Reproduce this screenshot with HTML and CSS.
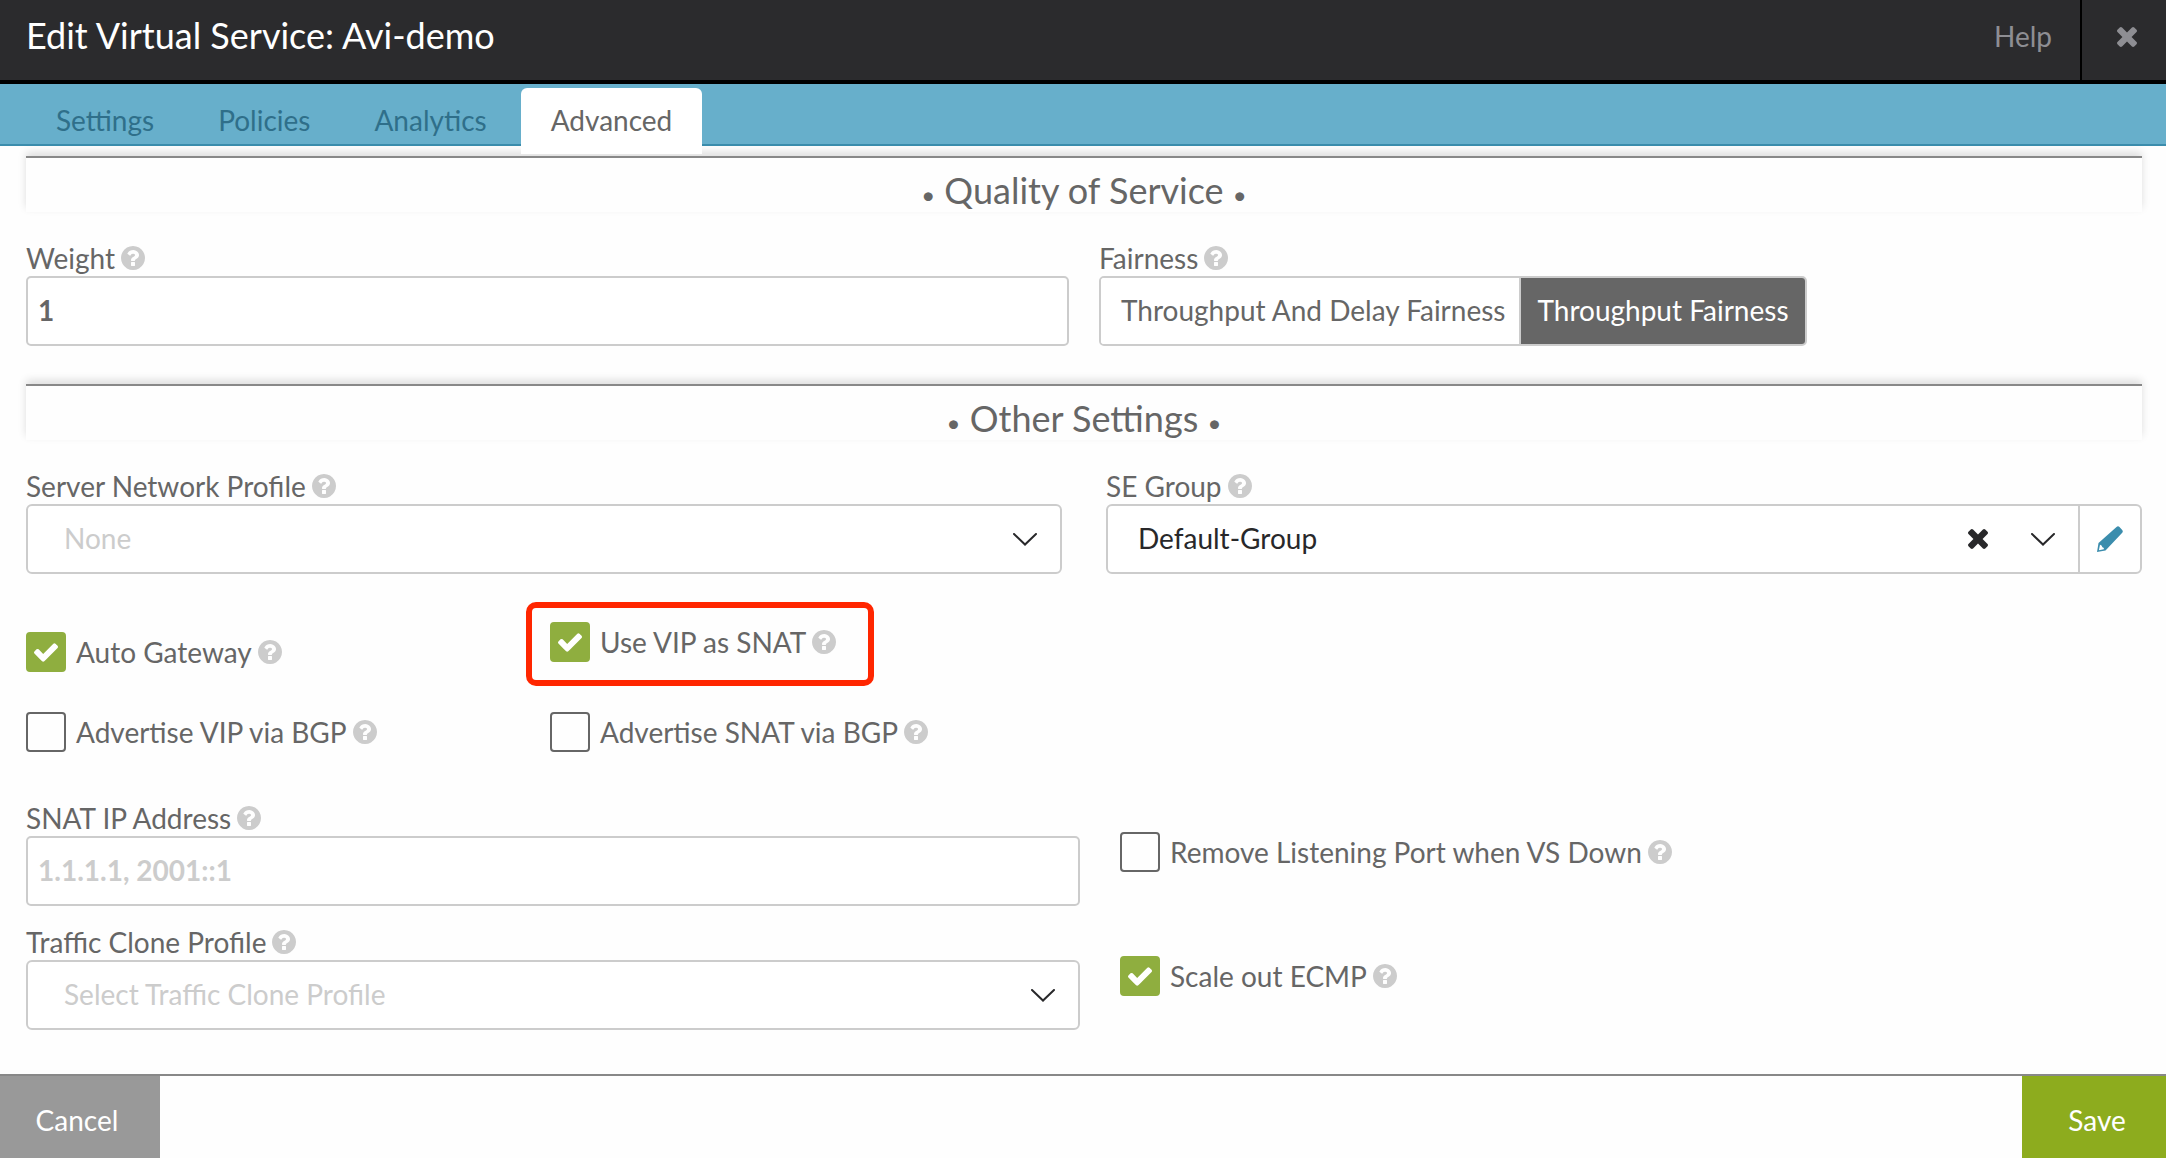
FILE: index.html
```html
<!DOCTYPE html>
<html lang="en">
<head>
<meta charset="utf-8">
<title>Edit Virtual Service: Avi-demo</title>
<link rel="stylesheet" href="styles.css">
</head>
<body>
<svg class="sprite" aria-hidden="true">
  <symbol id="help" viewBox="128 128 1536 1536"><path d="M1024 1376v-192q0-14-9-23t-23-9h-192q-14 0-23 9t-9 23v192q0 14 9 23t23 9h192q14 0 23-9t9-23zM1280 704q0-88-55.500-163t-138.500-116-170-41q-243 0-371 213-15 24 8 42l132 100q7 6 19 6 16 0 25-12 53-68 86-92 34-24 86-24 48 0 85.500 26t37.500 59q0 38-20 61t-68 45q-63 28-115.500 86.500t-52.500 125.500v36q0 14 9 23t23 9h192q14 0 23-9t9-23q0-19 21.500-49.500t54.500-49.500q32-18 49-28.500t46-35 44.500-48 28-60.500 12.500-81zM1664 896q0 209-103 385.500t-279.500 279.500-385.500 103-385.500-103-279.500-279.500-103-385.500 103-385.500 279.500-279.500 385.500-103 385.500 103 279.500 279.500 103 385.500z"/></symbol>
  <symbol id="times" viewBox="302 366 1188 1188"><path d="M1490 1322q0 40-28 68l-136 136q-28 28-68 28t-68-28l-294-294-294 294q-28 28-68 28t-68-28l-136-136q-28-28-28-68t28-68l294-294-294-294q-28-28-28-68t28-68l136-136q28-28 68-28t68 28l294 294 294-294q28-28 68-28t68 28l136 136q28 28 28 68t-28 68l-294 294 294 294q28 28 28 68z"/></symbol>
  <symbol id="chevron" viewBox="0 0 24 13"><path d="M1 1L12 11.500L23 1" fill="none" stroke="currentColor" stroke-width="2" stroke-linecap="round"/></symbol>
  <symbol id="pencil" viewBox="0 0 26 26"><path fill-rule="evenodd" d="M0 26L1.500 17L19.500 1Q21-.5 22.500 1L25.200 4Q26.500 5.500 25 7L8.500 24.500ZM1.900 24.200L6.800 23.300Q7.300 21.300 5.400 21.200Q4.900 19.200 3 18.800Z"/></symbol>
</svg>

<header class="topbar">
  <h1 class="title">Edit Virtual Service: Avi-demo</h1>
  <a class="help-link" href="#help-page">Help</a>
  <button class="close" type="button" aria-label="Close"><svg class="icon-x"><use href="#times"/></svg></button>
</header>

<nav class="tabs">
  <a class="tab" href="#settings">Settings</a>
  <a class="tab" href="#policies">Policies</a>
  <a class="tab" href="#analytics">Analytics</a>
  <a class="tab tab-active" href="#advanced" aria-current="page">Advanced</a>
</nav>

<main class="content">
  <section>
    <h2 class="heading"><span class="dot">•</span> Quality of Service <span class="dot">•</span></h2>
    <div class="row row-qos">
      <div class="field">
        <label class="label" for="weight">Weight <svg class="icon-help"><use href="#help"/></svg></label>
        <input class="text" id="weight" type="text" value="1">
      </div>
      <div class="field" role="radiogroup" aria-labelledby="fairness">
        <span class="label" id="fairness">Fairness <svg class="icon-help"><use href="#help"/></svg></span>
        <div class="segments">
          <label class="segment"><input type="radio" name="fairness">Throughput And Delay Fairness</label>
          <label class="segment"><input type="radio" name="fairness" checked>Throughput Fairness</label>
        </div>
      </div>
    </div>
  </section>

  <section>
    <h2 class="heading"><span class="dot">•</span> Other Settings <span class="dot">•</span></h2>
    <div class="row row-profile">
      <div class="field">
        <label class="label" for="profile">Server Network Profile <svg class="icon-help"><use href="#help"/></svg></label>
        <div class="picker">
          <select class="select empty" id="profile"><option>None</option></select>
          <svg class="chevron"><use href="#chevron"/></svg>
        </div>
      </div>
      <div class="field">
        <label class="label" for="group">SE Group <svg class="icon-help"><use href="#help"/></svg></label>
        <div class="picker picker-edit">
          <select class="select" id="group"><option>Default-Group</option></select>
          <button class="clear" type="button" aria-label="Clear"><svg class="icon-x"><use href="#times"/></svg></button>
          <svg class="chevron"><use href="#chevron"/></svg>
          <button class="edit" type="button" aria-label="Edit"><svg class="icon-pencil"><use href="#pencil"/></svg></button>
        </div>
      </div>
    </div>

    <div class="checks">
      <label class="check check-low"><input type="checkbox" checked>Auto Gateway <svg class="icon-help"><use href="#help"/></svg></label>
      <label class="check check-marked"><input type="checkbox" checked>Use VIP as SNAT <svg class="icon-help"><use href="#help"/></svg></label>
      <label class="check check-first"><input type="checkbox">Advertise VIP via BGP <svg class="icon-help"><use href="#help"/></svg></label>
      <label class="check"><input type="checkbox">Advertise SNAT via BGP <svg class="icon-help"><use href="#help"/></svg></label>
    </div>

    <div class="pairs">
      <div class="field">
        <label class="label" for="snat">SNAT IP Address <svg class="icon-help"><use href="#help"/></svg></label>
        <input class="text" id="snat" type="text" placeholder="1.1.1.1, 2001::1">
      </div>
      <label class="check"><input type="checkbox">Remove Listening Port when VS Down <svg class="icon-help"><use href="#help"/></svg></label>
      <div class="field">
        <label class="label" for="clone">Traffic Clone Profile <svg class="icon-help"><use href="#help"/></svg></label>
        <div class="picker">
          <select class="select empty" id="clone"><option>Select Traffic Clone Profile</option></select>
          <svg class="chevron"><use href="#chevron"/></svg>
        </div>
      </div>
      <label class="check"><input type="checkbox" checked>Scale out ECMP <svg class="icon-help"><use href="#help"/></svg></label>
    </div>
  </section>
</main>

<footer class="footer">
  <button class="cancel" type="button">Cancel</button>
  <button class="save" type="submit">Save</button>
</footer>
</body>
</html>
```

FILE: styles.css
```css
* { box-sizing: border-box; }

body {
  margin: 0;
  min-height: 100vh;
  display: flex;
  flex-direction: column;
  background: #fefefe;
  color: #666;
  font: 28px/36px Lato, sans-serif;
}

button, input, select { font: inherit; color: inherit; }
button { border: 0; padding: 0; background: none; cursor: pointer; }
a { text-decoration: none; }
svg { display: block; flex: none; fill: currentColor; }

.sprite { position: absolute; width: 0; height: 0; }
.icon-help { width: 24px; height: 24px; color: #ccc; }
.icon-x { width: 20px; height: 20px; }
.icon-pencil { width: 26px; height: 26px; }

/* Top bar */
.topbar {
  display: flex;
  height: 84px;
  border-bottom: 4px solid #000;
  background: #2b2b2d;
  color: #8e8e93;
  line-height: 72px;
}
.title {
  flex: 1;
  margin: 0;
  padding-left: 26px;
  color: #fff;
  font-size: 36px;
  font-weight: 400;
  line-height: 70px;
}
.help-link { padding-right: 28px; color: inherit; }
.close {
  width: 86px;
  padding: 0 0 6px 6px;
  border-left: 2px solid #000;
  display: grid;
  place-items: center;
}

/* Tabs */
.tabs {
  display: flex;
  gap: 4px;
  height: 62px;
  padding: 4px 26px 0;
  border-bottom: 2px solid #3b8dad;
  background: #67afcb;
}
.tab {
  height: 66px;
  padding: 0 30px;
  border-radius: 6px 6px 0 0;
  color: #2f6f8a;
  line-height: 64px;
}
.tab-active {
  position: relative;
  background: #fff;
  color: #666;
}

/* Form */
.content { flex: 1; padding: 10px 24px 44px 26px; }
.heading {
  margin: 0 0 28px;
  height: 56px;
  padding-top: 4px;
  border-top: 2px solid #888;
  background: #fefefe;
  box-shadow: 0 -4px 8px rgba(0, 0, 0, .13);
  font-size: 36px;
  font-weight: 400;
  line-height: 56px;
  text-align: center;
}
.dot { font-size: 24px; }
.row { display: grid; grid-template-columns: 1fr 1fr; }
.row-qos { gap: 30px; margin-bottom: 38px; }
.row-profile { gap: 44px; }
.label { display: flex; align-items: center; gap: 6px; height: 36px; }

.text {
  display: block;
  width: 100%;
  height: 70px;
  padding: 0 10px 2px;
  border: 2px solid #ccc;
  border-radius: 5px;
  background: #fff;
  font-weight: 700;
}
.text::placeholder { color: #ccc; opacity: 1; }

.segments {
  display: inline-flex;
  height: 70px;
  border: 2px solid #ccc;
  border-radius: 5px;
  overflow: hidden;
  vertical-align: top;
}
.segment { padding: 0 14px 0 20px; line-height: 64px; background: #fff; }
.segment + .segment { border-left: 2px solid #ccc; padding: 0 16px; }
.segment input { appearance: none; width: 0; margin: 0; float: left; }
.segment:has(:checked) { background: #666; color: #fff; }

.picker {
  display: grid;
  grid-template-columns: 1fr 70px;
  align-items: center;
  height: 70px;
  border: 2px solid #ccc;
  border-radius: 6px;
  background: #fff;
  color: #28282a;
}
.picker-edit { grid-template-columns: 1fr 60px 70px 62px; }
.select {
  grid-area: 1 / 1 / 2 / 3;
  appearance: none;
  width: 100%;
  height: 66px;
  padding: 0 36px 2px;
  border: 0;
  background: none;
}
.picker-edit .select { grid-column-end: 4; padding-left: 30px; }
.select.empty { color: #ccc; }
.chevron {
  grid-row: 1;
  grid-column: 2;
  width: 24px;
  height: 13px;
  justify-self: center;
  pointer-events: none;
}
.picker-edit .chevron { grid-column: 3; }
.clear { grid-area: 1 / 2; display: grid; place-items: center; }
.edit {
  grid-area: 1 / 4;
  height: 66px;
  border-left: 2px solid #ccc;
  color: #3b8dad;
  display: grid;
  place-items: center;
}

.check { display: flex; align-items: center; gap: 6px; height: 40px; }
.check input {
  appearance: none;
  flex: none;
  width: 40px;
  height: 40px;
  margin: 0 4px 0 0;
  border: 2px solid #666;
  border-radius: 4px;
}
.check input:checked {
  border-color: #8fae3f;
  background: #8fae3f url("data:image/svg+xml,%3Csvg xmlns='http://www.w3.org/2000/svg' viewBox='121 334 1550 1188'%3E%3Cpath fill='%23fff' d='M1671 566q0 40-28 68l-724 724-136 136q-28 28-68 28t-68-28l-136-136-362-362q-28-28-28-68t28-68l136-136q28-28 68-28t68 28l294 295 656-657q28-28 68-28t68 28l136 136q28 28 28 68z'/%3E%3C/svg%3E") center / 24px 19px no-repeat;
}

.checks {
  display: grid;
  grid-template-columns: repeat(4, 1fr);
  grid-template-rows: 50px 40px;
  row-gap: 40px;
  margin: 48px 0;
  padding-right: 20px;
}
.check-first { grid-column: 1; }
.check-low { align-self: end; }
/* Outline that calls attention to one option */
.check-marked {
  justify-self: start;
  outline: 6px solid #ff2600;
  height: 72px;
  width: 336px;
  margin: -14px 0 0 -18px;
  padding: 0 0 4px 18px;
  border-radius: 4px;
}

.pairs { display: grid; grid-template-columns: 1fr 1fr; row-gap: 18px; }
.pairs .field { padding-right: 4px; }
.pairs .check { margin: 32px 0 0 36px; }

/* Footer */
.footer {
  display: flex;
  justify-content: space-between;
  height: 84px;
  border-top: 2px solid #888;
}
.footer button { padding-top: 6px; color: #fff; }
.footer .cancel { width: 160px; padding-right: 6px; background: #999; }
.footer .save { width: 144px; padding-left: 6px; background: #8dac1e; }
```
